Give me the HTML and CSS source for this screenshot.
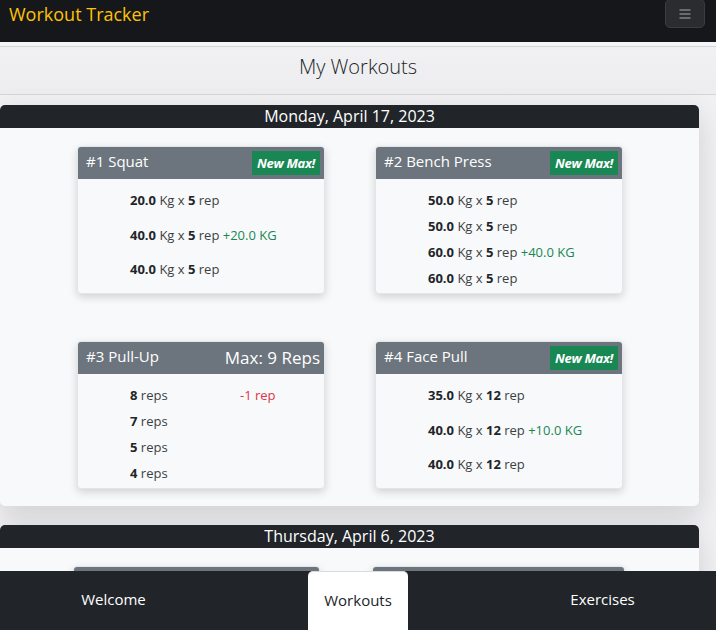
FILE: index.html
```html
<!DOCTYPE html>
<html lang="en">
<head>
<meta charset="utf-8">
<title>Workout Tracker</title>
<link rel="stylesheet" href="styles.css">
</head>
<body>
<header class="navbar">
  <a class="brand" href="#">Workout Tracker</a>
  <button class="toggler" aria-label="Menu">
    <svg width="12" height="10" viewBox="0 0 12 10"><path d="M0.5 1H11.5M0.5 5H11.5M0.5 9H11.5" stroke="#a9aaad" stroke-width="1"/></svg>
  </button>
</header>

<div class="page-title">My Workouts</div>

<main class="content">
  <section class="day">
    <h2 class="day-head">Monday, April 17, 2023</h2>
    <div class="day-body">
      <article class="card">
        <div class="card-head"><span class="card-title">#1 Squat</span><span class="badge">New Max!</span></div>
        <div class="card-body">
          <div class="set"><b>20.0</b> Kg x <b>5</b> rep</div>
          <div class="set"><b>40.0</b> Kg x <b>5</b> rep <span class="up">+20.0 KG</span></div>
          <div class="set"><b>40.0</b> Kg x <b>5</b> rep</div>
        </div>
      </article>
      <article class="card">
        <div class="card-head"><span class="card-title">#2 Bench Press</span><span class="badge">New Max!</span></div>
        <div class="card-body">
          <div class="set"><b>50.0</b> Kg x <b>5</b> rep</div>
          <div class="set"><b>50.0</b> Kg x <b>5</b> rep</div>
          <div class="set"><b>60.0</b> Kg x <b>5</b> rep <span class="up">+40.0 KG</span></div>
          <div class="set"><b>60.0</b> Kg x <b>5</b> rep</div>
        </div>
      </article>
      <article class="card">
        <div class="card-head"><span class="card-title">#3 Pull-Up</span><span class="max">Max: 9 Reps</span></div>
        <div class="card-body">
          <div class="set split"><span><b>8</b> reps</span><span class="down">-1 rep</span></div>
          <div class="set split"><span><b>7</b> reps</span><span></span></div>
          <div class="set split"><span><b>5</b> reps</span><span></span></div>
          <div class="set split"><span><b>4</b> reps</span><span></span></div>
        </div>
      </article>
      <article class="card">
        <div class="card-head"><span class="card-title">#4 Face Pull</span><span class="badge">New Max!</span></div>
        <div class="card-body">
          <div class="set"><b>35.0</b> Kg x <b>12</b> rep</div>
          <div class="set"><b>40.0</b> Kg x <b>12</b> rep <span class="up">+10.0 KG</span></div>
          <div class="set"><b>40.0</b> Kg x <b>12</b> rep</div>
        </div>
      </article>
    </div>
  </section>

  <section class="day">
    <h2 class="day-head">Thursday, April 6, 2023</h2>
    <div class="day-body day-body-alt">
      <article class="card">
        <div class="card-head"><span class="card-title">#1 Deadlift</span></div>
        <div class="card-body">
          <div class="set"><b>60.0</b> Kg x <b>5</b> rep</div>
          <div class="set"><b>80.0</b> Kg x <b>5</b> rep</div>
          <div class="set"><b>80.0</b> Kg x <b>5</b> rep</div>
        </div>
      </article>
      <article class="card">
        <div class="card-head"><span class="card-title">#2 Overhead Press</span></div>
        <div class="card-body">
          <div class="set"><b>30.0</b> Kg x <b>5</b> rep</div>
          <div class="set"><b>30.0</b> Kg x <b>5</b> rep</div>
          <div class="set"><b>30.0</b> Kg x <b>5</b> rep</div>
        </div>
      </article>
    </div>
  </section>
</main>

<nav class="tabbar">
  <a class="tab" href="#">Welcome</a>
  <a class="tab active" href="#">Workouts</a>
  <a class="tab" href="#">Exercises</a>
</nav>
</body>
</html>
```

FILE: styles.css
```css
* { box-sizing: border-box; }

html, body {
  margin: 0;
  padding: 0;
}

body {
  font-family: "Open Sans", "Noto Sans", sans-serif;
  background: #ececee;
  color: #212529;
  padding-bottom: 80px;
}

.navbar {
  height: 42px;
  background: #15171b;
  display: flex;
  justify-content: space-between;
  align-items: flex-start;
  padding: 0 11px 0 9px;
}

.brand {
  color: #ffc107;
  text-decoration: none;
  font-size: 18px;
  line-height: 28px;
}

.toggler {
  width: 40px;
  height: 29px;
  margin-top: -1px;
  background: #2b2c30;
  border: 1px solid #3b3c40;
  border-radius: 5px;
  display: flex;
  align-items: center;
  justify-content: center;
  padding: 0;
}

.page-title {
  margin-top: 4px;
  height: 49px;
  padding-bottom: 8px;
  border-top: 1px solid #d4d5d7;
  border-bottom: 1px solid #d4d5d7;
  background: linear-gradient(#f1f1f3, #ededef);
  display: flex;
  align-items: center;
  justify-content: center;
  font-size: 20px;
  font-weight: 300;
  color: #212529;
  box-shadow: 0 -4px 0 #f6f6f8;
}

.content {
  padding: 10px 17px 0 0;
  background: #f1f1f3;
  display: flex;
  flex-direction: column;
  gap: 19px;
}

.day {
  background: #f8f9fa;
  border-radius: 5px;
  box-shadow: 0 10px 30px rgba(0, 0, 0, 0.14);
}

.day-head {
  margin: 0;
  height: 23px;
  background: #212529;
  color: #fff;
  border-radius: 5px 5px 0 0;
  font-size: 16px;
  font-weight: 400;
  line-height: 22px;
  text-align: center;
}

.day-body {
  display: grid;
  grid-template-columns: 248px 248px;
  column-gap: 50px;
  row-gap: 47px;
  padding: 18px 76px 17px 77px;
}

.day-body-alt {
  grid-template-columns: 247px 253px;
  column-gap: 52px;
  padding-left: 73px;
}

.card {
  background: #f8f9fa;
  border: 1px solid #e3e5e8;
  border-radius: 4px;
  box-shadow: 0 3px 9px rgba(0, 0, 0, 0.16);
  display: flex;
  flex-direction: column;
  overflow: hidden;
}

.card-head {
  height: 32px;
  background: #6c757d;
  display: flex;
  align-items: center;
  justify-content: space-between;
  padding: 0 4px 0 8px;
  color: #fff;
}

.card-title {
  font-size: 15px;
  padding-bottom: 4px;
}

.badge {
  background: #198754;
  color: #fff;
  font-weight: 700;
  font-style: italic;
  font-size: 13px;
  height: 24px;
  line-height: 24px;
  padding: 0 5px;
  letter-spacing: -0.3px;
}

.max {
  font-size: 17px;
  padding-bottom: 1px;
}

.card-body {
  flex: 1;
  display: flex;
  flex-direction: column;
  padding: 8px 52px 2px;
}

.set {
  flex: 1;
  min-height: 26px;
  padding-top: 3px;
  font-size: 13px;
  line-height: 20px;
  color: #3b3f44;
  white-space: nowrap;
}

.set b {
  color: #212529;
  font-weight: 700;
}

.split {
  display: grid;
  grid-template-columns: 110px auto;
}

.up { color: #198754; }
.down { color: #dc3545; }

.tabbar {
  position: fixed;
  left: 0;
  right: 0;
  bottom: 0;
  height: 59px;
  background: #212529;
  display: flex;
  justify-content: space-around;
  align-items: stretch;
}

.tab {
  color: #fff;
  text-decoration: none;
  font-size: 15px;
  display: flex;
  align-items: center;
  padding-bottom: 3px;
}

.tab.active {
  background: #fff;
  color: #212529;
  padding: 0 16px 3px;
  border-radius: 5px 5px 0 0;
  border-top: 1px solid #d9dbde;
}
```
